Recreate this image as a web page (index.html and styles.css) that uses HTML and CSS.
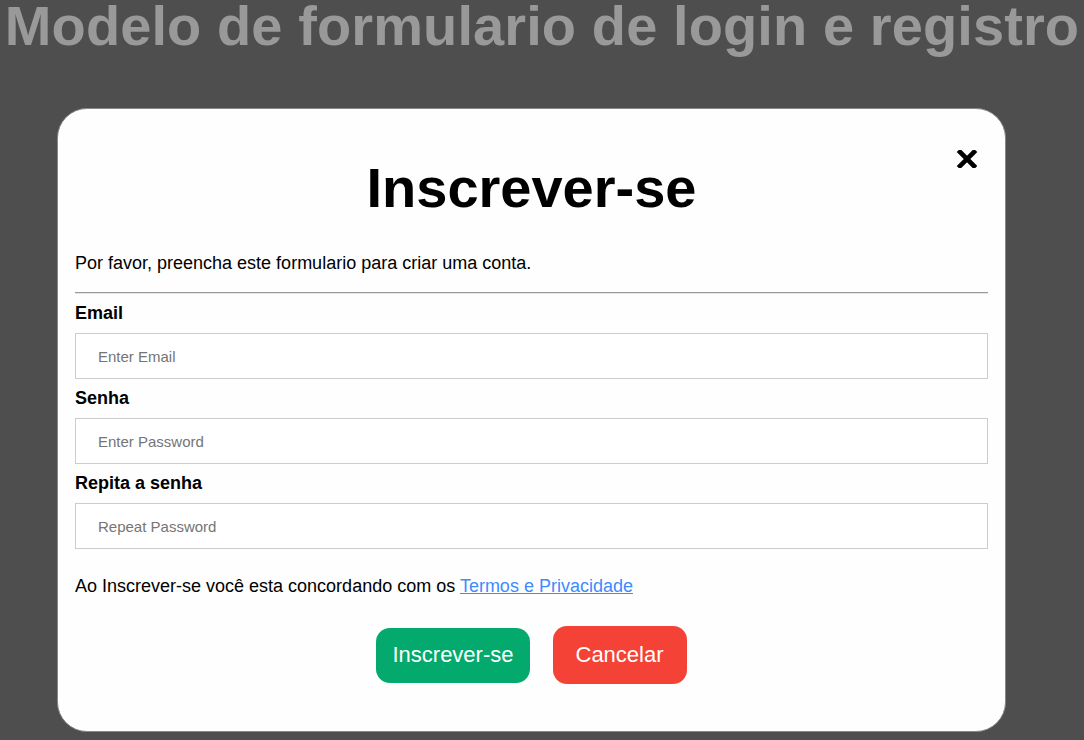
FILE: index.html
```html
<!DOCTYPE html>
<html lang="pt">
<head>
<meta charset="utf-8">
<title>Modelo de formulario de login e registro</title>
<link rel="stylesheet" href="styles.css">
</head>
<body>
<h1 class="page-title">Modelo de formulario de login e registro</h1>
<div class="modal">
  <span class="close" title="Close Modal">
    <svg width="22" height="18" viewBox="0 0 22 18"><path d="M4 2 L18 16 M18 2 L4 16" stroke="#000" stroke-width="4.6" stroke-linecap="square" fill="none"/></svg>
  </span>
  <form class="modal-content">
    <h2 class="modal-title">Inscrever-se</h2>
    <p class="intro">Por favor, preencha este formulario para criar uma conta.</p>
    <hr class="divider">
    <label class="field-label" for="email">Email</label>
    <input class="field" id="email" type="text" placeholder="Enter Email">
    <label class="field-label" for="psw">Senha</label>
    <input class="field" id="psw" type="password" placeholder="Enter Password">
    <label class="field-label" for="psw-repeat">Repita a senha</label>
    <input class="field" id="psw-repeat" type="password" placeholder="Repeat Password">
    <p class="terms">Ao Inscrever-se você esta concordando com os <a href="#" class="terms-link">Termos e Privacidade</a></p>
    <div class="actions">
      <button type="button" class="btn btn-signup">Inscrever-se</button>
      <button type="button" class="btn btn-cancel">Cancelar</button>
    </div>
  </form>
</div>
</body>
</html>
```
FILE: styles.css
```css
html, body {
  margin: 0;
  padding: 0;
}
body {
  background: #4e4e4e;
  font-family: "Liberation Sans", Arial, sans-serif;
  color: #000;
  height: 740px;
  overflow: hidden;
}
.page-title {
  margin: 0;
  text-align: center;
  font-size: 56px;
  letter-spacing: 0.1px;
  line-height: 51px;
  font-weight: bold;
  color: #999999;
  white-space: nowrap;
}
.modal {
  position: relative;
  box-sizing: border-box;
  margin: 57px 0 0 57px;
  width: 949px;
  height: 624px;
  background: #fefefe;
  border: 1px solid #888;
  border-radius: 30px;
  padding: 0 17px;
}
.close {
  position: absolute;
  top: 41px;
  right: 27px;
  width: 22px;
  height: 18px;
  display: block;
  cursor: pointer;
}
.close svg {
  display: block;
}
.modal-content {
  display: flex;
  flex-direction: column;
}
.modal-title {
  margin: 47px 0 0;
  text-align: center;
  font-size: 56px;
  line-height: 64px;
  font-weight: bold;
}
.intro {
  margin: 33px 0 0;
  font-size: 18px;
  line-height: 21px;
}
.divider {
  margin: 18px 0 0;
  border: 0;
  border-top: 1px solid #999;
  border-bottom: 1px solid #e4e4e4;
  height: 0;
}
.field-label {
  display: block;
  margin: 9px 0 9px;
  font-size: 18px;
  line-height: 21px;
  font-weight: bold;
}
.field {
  box-sizing: border-box;
  width: 100%;
  height: 46px;
  margin: 0;
  padding: 0 22px;
  border: 1px solid #ccc;
  background: #fff;
  font-family: "Liberation Sans", Arial, sans-serif;
  font-size: 15px;
  color: #000;
  outline: none;
}
.field::placeholder {
  color: #757575;
}
.terms {
  margin: 27px 0 0;
  font-size: 18px;
  line-height: 21px;
}
.terms-link {
  color: #3d8bff;
  text-decoration: underline;
}
.actions {
  display: flex;
  justify-content: center;
  align-items: center;
  gap: 23px;
  margin-top: 29px;
}
.btn {
  border: none;
  color: #fff;
  font-family: "Liberation Sans", Arial, sans-serif;
  font-size: 22px;
  cursor: pointer;
  border-radius: 14px;
}
.btn-signup {
  background: #04aa6d;
  height: 55px;
  padding: 0 16px;
}
.btn-cancel {
  background: #f44336;
  height: 58px;
  padding: 0 23px;
}
```
